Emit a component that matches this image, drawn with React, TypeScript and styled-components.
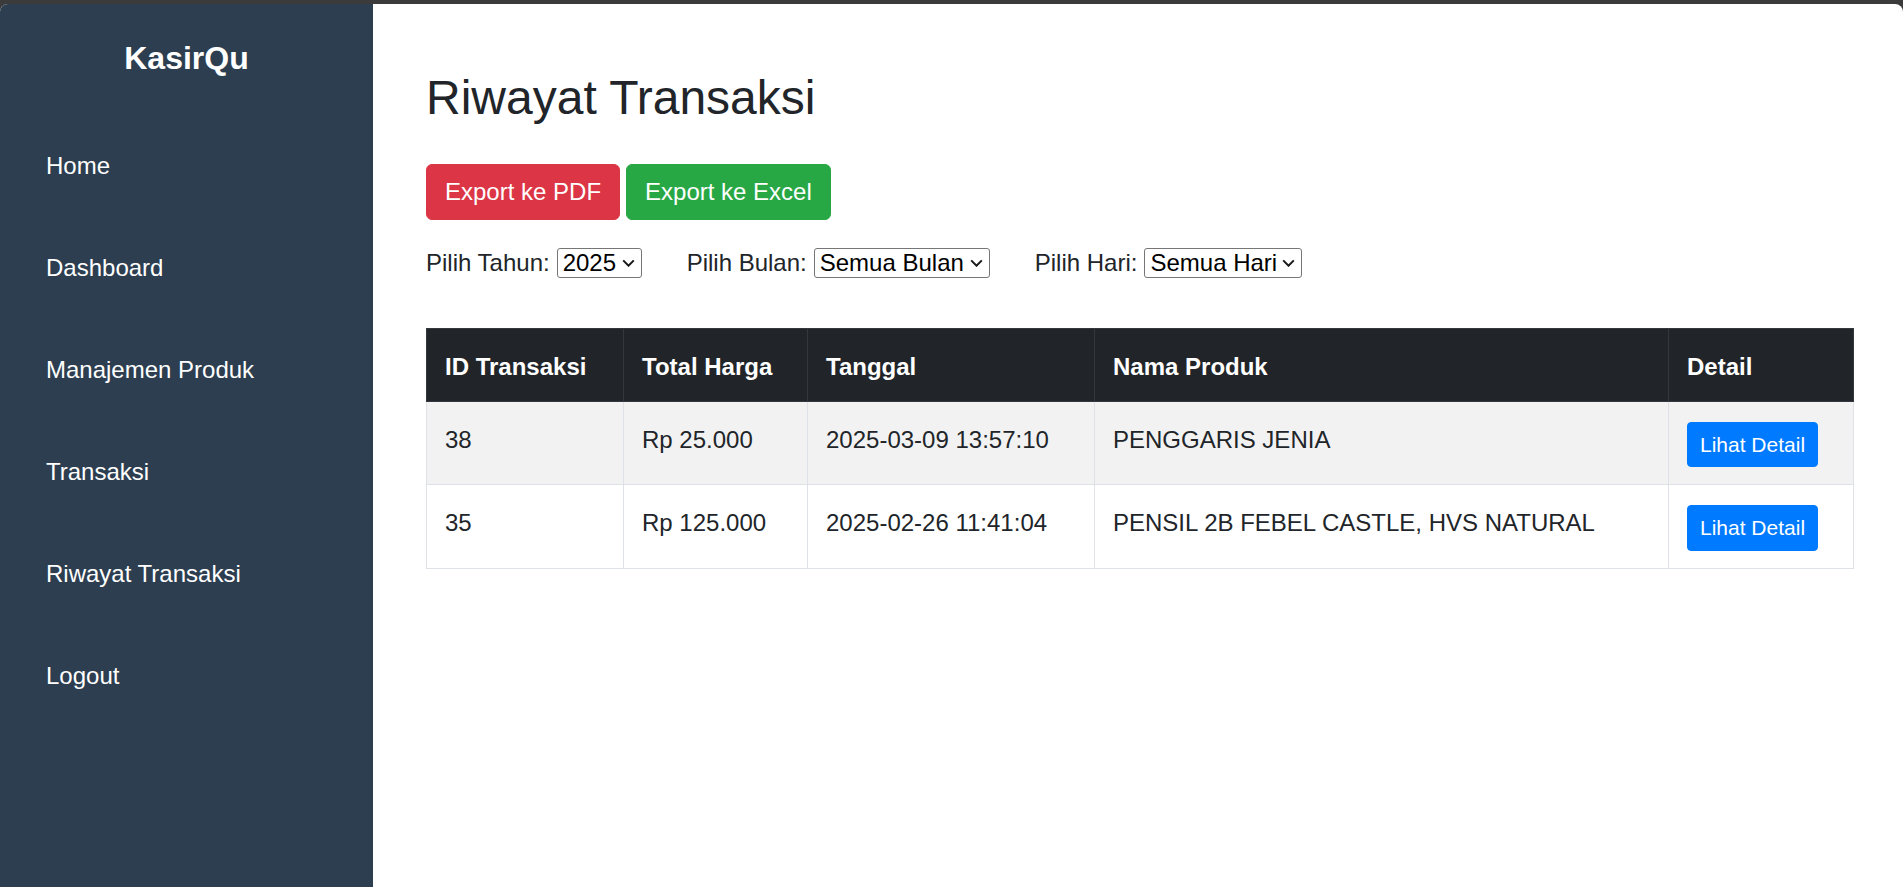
import React from "react";
import styled, { createGlobalStyle } from "styled-components";

const GlobalStyle = createGlobalStyle`
    html, body {
        margin: 0;
        padding: 0;
    }
    body {
        padding-top: 4px;
        background: #3b3b3b;
        font-family: "Liberation Sans", Arial, sans-serif;
        color: #212529;
    }
    * {
        box-sizing: border-box;
    }
`;

// layout

const Shell = styled.div`
    display: flex;
    height: calc(100vh - 4px);
    background: #ffffff;
    border-radius: 8px 8px 0 0;
    overflow: hidden;
`;

const Sidebar = styled.aside`
    width: 373px;
    flex-shrink: 0;
    background: #2c3e50;
    color: #ffffff;
    padding-top: 35px;
`;

const Brand = styled.h2`
    margin: 0 0 38px;
    font-size: 32px;
    font-weight: bold;
    line-height: 1.2;
    text-align: center;
`;

const NavList = styled.ul`
    list-style: none;
    margin: 0;
    padding: 0;
`;

const NavLink = styled.a`
    display: flex;
    align-items: center;
    height: 102px;
    padding-left: 46px;
    color: #ffffff;
    font-size: 24px;
    text-decoration: none;
`;

const Main = styled.main`
    flex: 1;
    padding: 65px 50px 0 53px;
`;

const Title = styled.h1`
    margin: 0 0 37px;
    font-size: 48px;
    font-weight: normal;
    line-height: 1.2;
    color: #212529;
`;

const Actions = styled.div`
    display: flex;
    gap: 6px;
    margin-bottom: 28px;
`;

const ActionButton = styled.button<{ $color: string }>`
    font-family: inherit;
    font-size: 24px;
    line-height: 1.5;
    padding: 9px 18px;
    color: #ffffff;
    background: ${(p) => p.$color};
    border: 1px solid ${(p) => p.$color};
    border-radius: 6px;
    cursor: pointer;
`;

const Filters = styled.div`
    display: flex;
    align-items: center;
    gap: 45px;
    margin-bottom: 50px;
`;

const FilterGroup = styled.label`
    display: flex;
    align-items: center;
    gap: 7px;
    font-size: 24px;
    color: #212529;
`;

const SelectWrap = styled.span`
    position: relative;
    display: inline-flex;
`;

const Select = styled.select`
    appearance: none;
    -webkit-appearance: none;
    font-family: inherit;
    font-size: 24px;
    height: 30px;
    padding: 0 24px 0 5px;
    color: #000000;
    background: #ffffff;
    border: 1px solid #767676;
    border-radius: 3px;
`;

const Chevron = styled.svg`
    position: absolute;
    right: 7px;
    top: 50%;
    transform: translateY(-50%);
    pointer-events: none;
`;

const Table = styled.table`
    width: 100%;
    border-collapse: collapse;
    table-layout: fixed;
    font-size: 24px;
    color: #212529;
`;

const Col = styled.col<{ $w: number }>`
    width: ${(p) => p.$w}px;
`;

const Th = styled.th`
    background: #212529;
    color: #ffffff;
    font-weight: bold;
    text-align: left;
    line-height: 1.5;
    padding: 20px 18px 16px;
    border: 1px solid #32383e;
`;

const Row = styled.tr<{ $striped?: boolean }>`
    background: ${(p) => (p.$striped ? "#f2f2f2" : "#ffffff")};
`;

const Td = styled.td`
    line-height: 1.5;
    padding: 20px 18px 17px;
    border: 1px solid #dee2e6;
    vertical-align: top;
`;

const DetailButton = styled.button`
    display: inline-block;
    vertical-align: top;
    font-family: inherit;
    font-size: 21px;
    line-height: 1.5;
    padding: 6px 12px;
    color: #ffffff;
    background: #007bff;
    border: 1px solid #007bff;
    border-radius: 4px;
    cursor: pointer;
`;

const menu = ["Home", "Dashboard", "Manajemen Produk", "Transaksi", "Riwayat Transaksi", "Logout"];

const bulan = ["Semua Bulan", "Januari", "Februari", "Maret", "April", "Mei", "Juni", "Juli", "Agustus", "September", "Oktober", "November", "Desember"];

const transaksi = [
    { id: 38, total: "Rp 25.000", tanggal: "2025-03-09 13:57:10", produk: "PENGGARIS JENIA" },
    { id: 35, total: "Rp 125.000", tanggal: "2025-02-26 11:41:04", produk: "PENSIL 2B FEBEL CASTLE, HVS NATURAL" },
];

function Dropdown({ options }: { options: string[] }) {
    return (
        <SelectWrap>
            <Select defaultValue={options[0]}>
                {options.map((o) => (
                    <option key={o} value={o}>{o}</option>
                ))}
            </Select>
            <Chevron width="13" height="8" viewBox="0 0 13 8">
                <path d="M1.2 1.4l5.3 5.3 5.3-5.3" fill="none" stroke="#1a1a1a" strokeWidth="2" />
            </Chevron>
        </SelectWrap>
    );
}

function App() {
    const hari = ["Semua Hari", ...Array.from({ length: 31 }, (_, i) => String(i + 1))];

    return (
        <>
            <GlobalStyle />
            <Shell>
                <Sidebar>
                    <Brand>KasirQu</Brand>
                    <NavList>
                        {menu.map((m) => (
                            <li key={m}><NavLink href="#">{m}</NavLink></li>
                        ))}
                    </NavList>
                </Sidebar>
                <Main>
                    <Title>Riwayat Transaksi</Title>
                    <Actions>
                        <ActionButton $color="#dc3545">Export ke PDF</ActionButton>
                        <ActionButton $color="#28a745">Export ke Excel</ActionButton>
                    </Actions>
                    <Filters>
                        <FilterGroup>
                            Pilih Tahun:
                            <Dropdown options={["2025", "2024"]} />
                        </FilterGroup>
                        <FilterGroup>
                            Pilih Bulan:
                            <Dropdown options={bulan} />
                        </FilterGroup>
                        <FilterGroup>
                            Pilih Hari:
                            <Dropdown options={hari} />
                        </FilterGroup>
                    </Filters>
                    <Table>
                        <colgroup>
                            <Col $w={197} />
                            <Col $w={184} />
                            <Col $w={287} />
                            <Col $w={574} />
                            <Col $w={185} />
                        </colgroup>
                        <thead>
                            <tr>
                                <Th>ID Transaksi</Th>
                                <Th>Total Harga</Th>
                                <Th>Tanggal</Th>
                                <Th>Nama Produk</Th>
                                <Th>Detail</Th>
                            </tr>
                        </thead>
                        <tbody>
                            {transaksi.map((t, i) => (
                                <Row key={t.id} $striped={i % 2 === 0}>
                                    <Td>{t.id}</Td>
                                    <Td>{t.total}</Td>
                                    <Td>{t.tanggal}</Td>
                                    <Td>{t.produk}</Td>
                                    <Td><DetailButton>Lihat Detail</DetailButton></Td>
                                </Row>
                            ))}
                        </tbody>
                    </Table>
                </Main>
            </Shell>
        </>
    );
}

export default App;
